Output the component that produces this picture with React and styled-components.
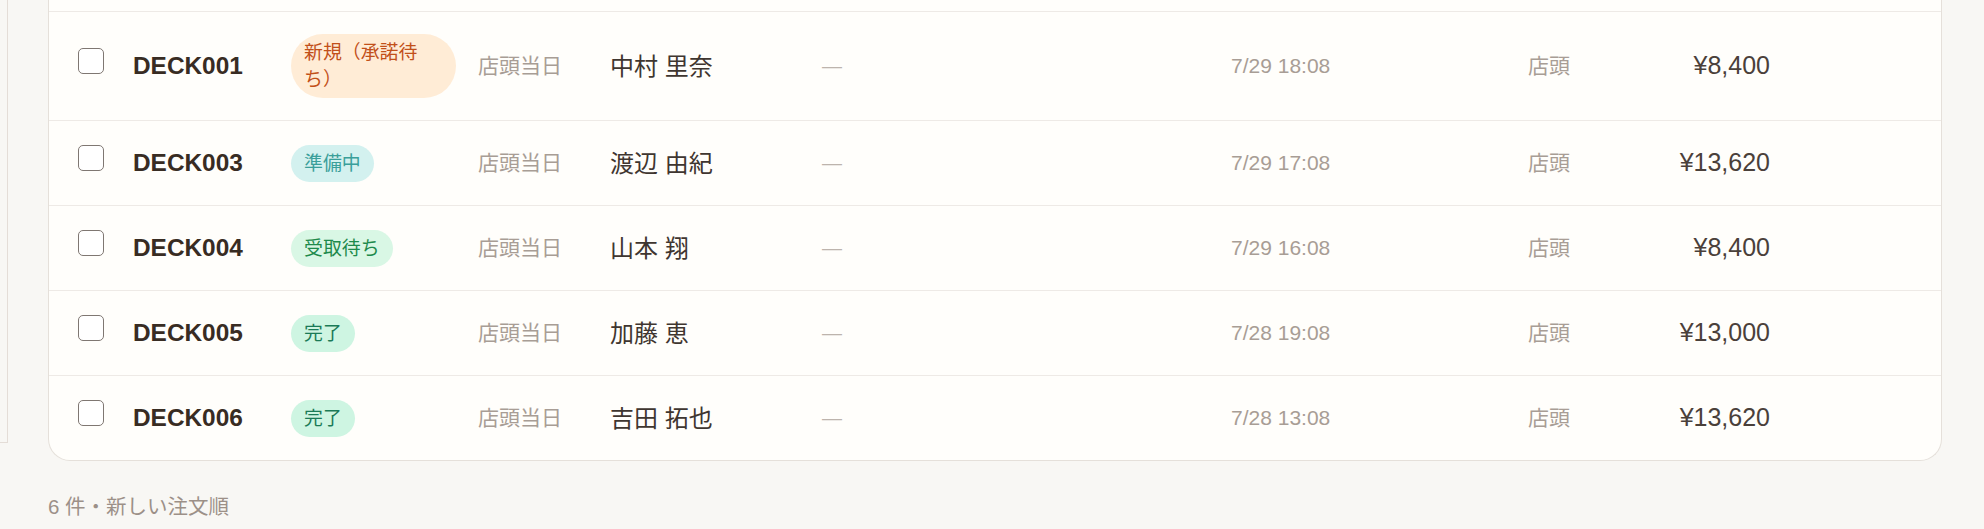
import styled, { createGlobalStyle } from "styled-components";


const GlobalStyle = createGlobalStyle`
	html, body {
		margin:0;
		padding:0;
		background:#f8f7f4;
		font-family:"Liberation Sans", "Noto Sans CJK JP", sans-serif;
		overflow:hidden;
	}
	* { box-sizing:border-box; }
`;

const Page = styled.div`
	display:flex;
	align-items:flex-start;
	min-height:529px;
`;

const SideEdge = styled.div`
	width:8px;
	height:443px;
	flex-shrink:0;
	border-right:1px solid #e4ddd7;
	border-bottom:1px solid #e4ddd7;
`;

const Main = styled.div`
	flex:1;
	padding:0 42px 0 40px;
`;

const Card = styled.div`
	background:#fffefb;
	border:1px solid #e5e0da;
	border-top:none;
	border-radius:0 0 22px 22px;
	padding-top:11px;
	overflow:hidden;
`;

const Row = styled.div`
	display:grid;
	grid-template-columns:55px 158px 187px 132px 212px 409px 297px 72px 170px 1fr;
	align-items:center;
	min-height:85px;
	padding:22px 0 22px 29px;
	border-top:1px solid #eeeae6;
`;

const Check = styled.input.attrs({ type: "checkbox" })`
	appearance:none;
	width:26px;
	height:26px;
	margin:0 0 11px;
	border:1.5px solid #7f7772;
	border-radius:5px;
	background:#fff;
	cursor:pointer;
`;

const OrderId = styled.span`
	font-size:24.4px;
	font-weight:700;
	color:#382c23;
`;

const tones = {
	new: { bg: "#ffecd6", fg: "#c2501a" },
	prep: { bg: "#d3f1ef", fg: "#3a9f9a" },
	ready: { bg: "#d9f7e5", fg: "#1e8a4c" },
	done: { bg: "#cef5e2", fg: "#1b7a57" },
};

const Badge = styled.span`
	justify-self:start;
	max-width:165px;
	padding:5px 13px;
	border-radius:999px;
	font-size:18.9px;
	line-height:27px;
	background:${props => tones[props.tone].bg};
	color:${props => tones[props.tone].fg};
	${props => props.tone === "new" ? "border-radius:32px;" : false};
`;

const Muted = styled.span`
	font-size:21px;
	color:#a89d95;
	margin-bottom:${props => props.cjk ? "4px" : "0"};
`;

const Name = styled.span`
	font-size:24px;
	color:#3f3630;
	margin-bottom:4px;
`;

const Dash = styled.span`
	font-size:20px;
	color:#bdb4ad;
`;

const Amount = styled.span`
	justify-self:end;
	font-size:25px;
	color:#4a403a;
	margin-bottom:2px;
`;

const Footer = styled.p`
	margin:31px 0 0;
	font-size:20.5px;
	line-height:30px;
	color:#9c9088;
`;


const orders = [
	{ id: "DECK001", status: "新規（承諾待ち）", tone: "new", name: "中村 里奈", date: "7/29 18:08", amount: "¥8,400" },
	{ id: "DECK003", status: "準備中", tone: "prep", name: "渡辺 由紀", date: "7/29 17:08", amount: "¥13,620" },
	{ id: "DECK004", status: "受取待ち", tone: "ready", name: "山本 翔", date: "7/29 16:08", amount: "¥8,400" },
	{ id: "DECK005", status: "完了", tone: "done", name: "加藤 恵", date: "7/28 19:08", amount: "¥13,000" },
	{ id: "DECK006", status: "完了", tone: "done", name: "吉田 拓也", date: "7/28 13:08", amount: "¥13,620" },
];


const App = () => {

	return (
		<Page>
		<GlobalStyle/>
			<SideEdge/>
			<Main>
				<Card>
					{orders.map(order => (
						<Row key={order.id}>
							<Check/>
							<OrderId>{order.id}</OrderId>
							<Badge tone={order.tone}>{order.status}</Badge>
							<Muted cjk>店頭当日</Muted>
							<Name>{order.name}</Name>
							<Dash>—</Dash>
							<Muted>{order.date}</Muted>
							<Muted cjk>店頭</Muted>
							<Amount>{order.amount}</Amount>
							<span/>
						</Row>
					))}
				</Card>
				<Footer>6 件・新しい注文順</Footer>
			</Main>
		</Page>
	);
}


export default App;
